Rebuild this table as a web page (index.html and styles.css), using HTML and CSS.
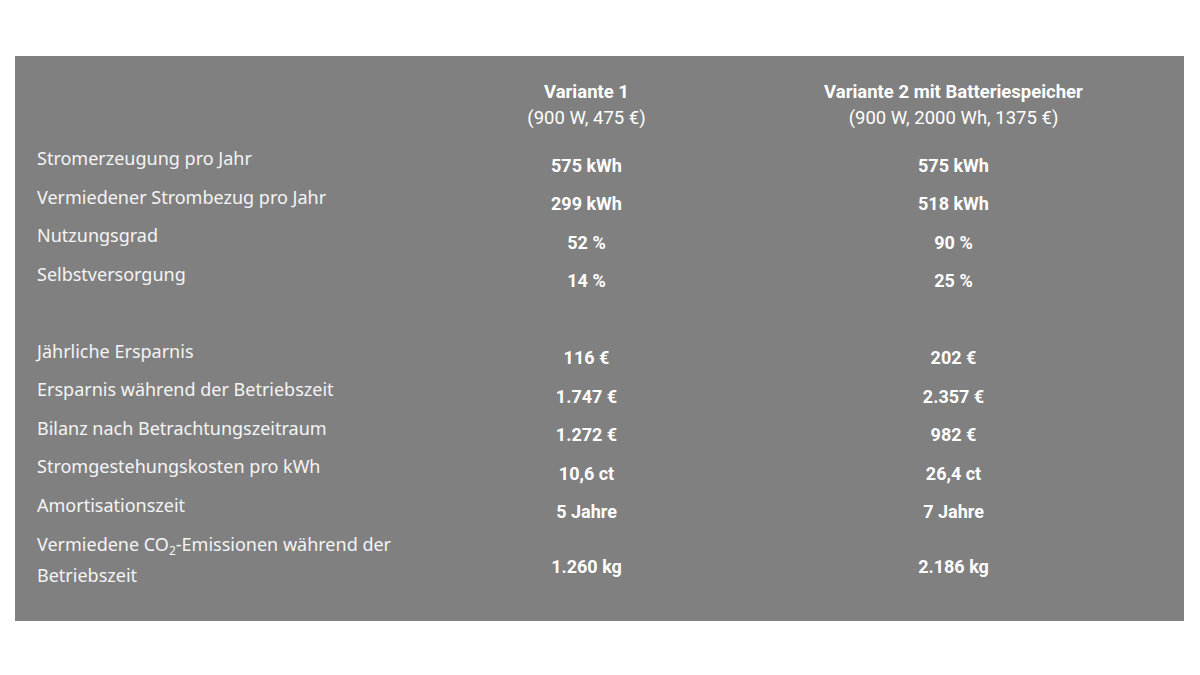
FILE: index.html
```html
<!DOCTYPE html>
<html lang="de">
<head>
<meta charset="utf-8">
<title>Vergleich Balkonkraftwerk</title>
<link rel="stylesheet" href="styles.css">
</head>
<body>
<div class="page">
  <section class="panel">
    <div class="row head">
      <div class="label"></div>
      <div class="value"><strong>Variante 1</strong><span>(900 W, 475 €)</span></div>
      <div class="value"><strong>Variante 2 mit Batteriespeicher</strong><span>(900 W, 2000 Wh, 1375 €)</span></div>
    </div>
    <div class="row"><div class="label">Stromerzeugung pro Jahr</div><div class="value num">575 kWh</div><div class="value num">575 kWh</div></div>
    <div class="row"><div class="label">Vermiedener Strombezug pro Jahr</div><div class="value num">299 kWh</div><div class="value num">518 kWh</div></div>
    <div class="row"><div class="label">Nutzungsgrad</div><div class="value num">52 %</div><div class="value num">90 %</div></div>
    <div class="row"><div class="label">Selbstversorgung</div><div class="value num">14 %</div><div class="value num">25 %</div></div>
    <div class="row spacer"><div class="label">&nbsp;</div><div class="value"></div><div class="value"></div></div>
    <div class="row"><div class="label">Jährliche Ersparnis</div><div class="value num">116 €</div><div class="value num">202 €</div></div>
    <div class="row"><div class="label">Ersparnis während der Betriebszeit</div><div class="value num">1.747 €</div><div class="value num">2.357 €</div></div>
    <div class="row"><div class="label">Bilanz nach Betrachtungszeitraum</div><div class="value num">1.272 €</div><div class="value num">982 €</div></div>
    <div class="row"><div class="label">Stromgestehungskosten pro kWh</div><div class="value num">10,6 ct</div><div class="value num">26,4 ct</div></div>
    <div class="row"><div class="label">Amortisationszeit</div><div class="value num">5 Jahre</div><div class="value num">7 Jahre</div></div>
    <div class="row last"><div class="label">Vermiedene CO<sub>2</sub>-Emissionen während der Betriebszeit</div><div class="value num">1.260 kg</div><div class="value num">2.186 kg</div></div>
  </section>
</div>
</body>
</html>
```

FILE: styles.css
```css
html, body {
  margin: 0;
  padding: 0;
  background: #ffffff;
}

.page {
  padding: 56px 16px 0 15px;
}

.panel {
  background: #808080;
  color: #f4f4f4;
  padding: 23px 22px 22px 22px;
  font-family: "Noto Sans", "Open Sans", sans-serif;
}

.row {
  display: grid;
  grid-template-columns: 366px 367px 367px;
  align-items: center;
}

.row.head {
  margin-bottom: 12px;
}

.row.last .label {
  padding-top: 1px;
}

.label {
  font-size: 18px;
  line-height: 31px;
  padding-bottom: 7.5px;
  max-width: 370px;
}

.label sub {
  font-size: 12px;
  line-height: 1;
  vertical-align: -4px;
}

.value {
  text-align: center;
  font-family: "Roboto", "Liberation Sans", sans-serif;
  font-size: 18px;
  color: #ffffff;
}

.value.num {
  padding-top: 6px;
}

.head .value {
  display: flex;
  flex-direction: column;
  font-size: 18.5px;
  line-height: 26px;
}

.head .value strong {
  font-weight: 700;
}

.head .value span {
  font-weight: 400;
}

.num {
  font-weight: 700;
}
```
